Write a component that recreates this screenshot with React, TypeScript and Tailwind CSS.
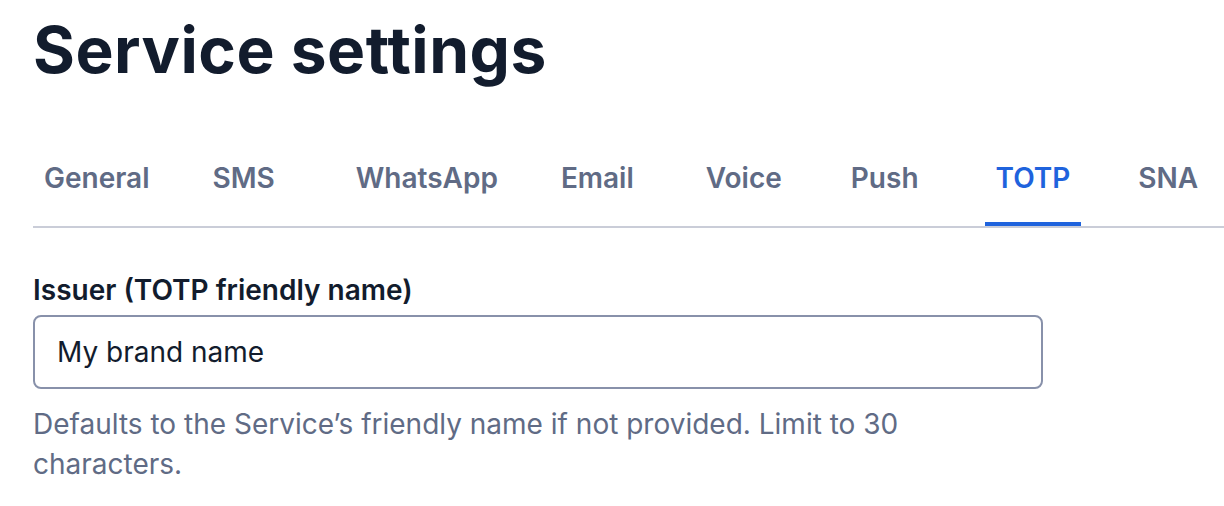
import { useState } from "react";

const tabs = [
  { name: "General", ml: "ml-0" },
  { name: "SMS", ml: "ml-[41px]" },
  { name: "WhatsApp", ml: "ml-[59px]" },
  { name: "Email", ml: "ml-[41px]" },
  { name: "Voice", ml: "ml-[50px]" },
  { name: "Push", ml: "ml-[47px]" },
  { name: "TOTP", ml: "ml-[55px]" },
  { name: "SNA", ml: "ml-[46px]" },
];

export default function App() {
  const [current, setCurrent] = useState(6);
  const [issuer, setIssuer] = useState("My brand name");

  return (
    <main className="min-h-screen w-full overflow-hidden bg-white pl-[33px] font-['Inter',sans-serif]">
      <h1 className="mt-[10px] text-[64px] leading-[80px] font-bold tracking-[0.5px] text-[#121c2d]">
        Service settings
      </h1>

      <div className="mt-[52px] flex w-[1400px] border-b-2 border-[#cacdd8]">
        {tabs.map((tab, index) => (
          <button
            key={tab.name}
            onClick={() => setCurrent(index)}
            className={`${tab.ml} shrink-0 whitespace-nowrap border-b-4 px-[11px] pt-[16px] pb-[24px] text-[28px] leading-[40px] font-semibold ${
              index == current
                ? "border-[#1f63dd] text-[#1f63dd]"
                : "border-transparent text-[#606b85]"
            }`}
          >
            {tab.name}
          </button>
        ))}
      </div>

      <div className="mt-[42px] w-[1010px]">
        <label
          htmlFor="issuer"
          className="mb-[5px] block text-[28px] leading-[40px] font-semibold text-[#121c2d]"
        >
          Issuer (TOTP friendly name)
        </label>
        <div className="flex h-[74px] items-center rounded-[8px] border-2 border-[#8891aa] bg-white px-[22px]">
          <input
            id="issuer"
            value={issuer}
            onChange={(e) => setIssuer(e.target.value)}
            className="w-full bg-transparent text-[28px] leading-[40px] text-[#121c2d] outline-none"
          />
        </div>
        <p className="mt-[15px] w-[900px] text-[28px] leading-[40px] text-[#606b85]">
          Defaults to the Service’s friendly name if not provided. Limit to 30
          characters.
        </p>
      </div>
    </main>
  );
}
